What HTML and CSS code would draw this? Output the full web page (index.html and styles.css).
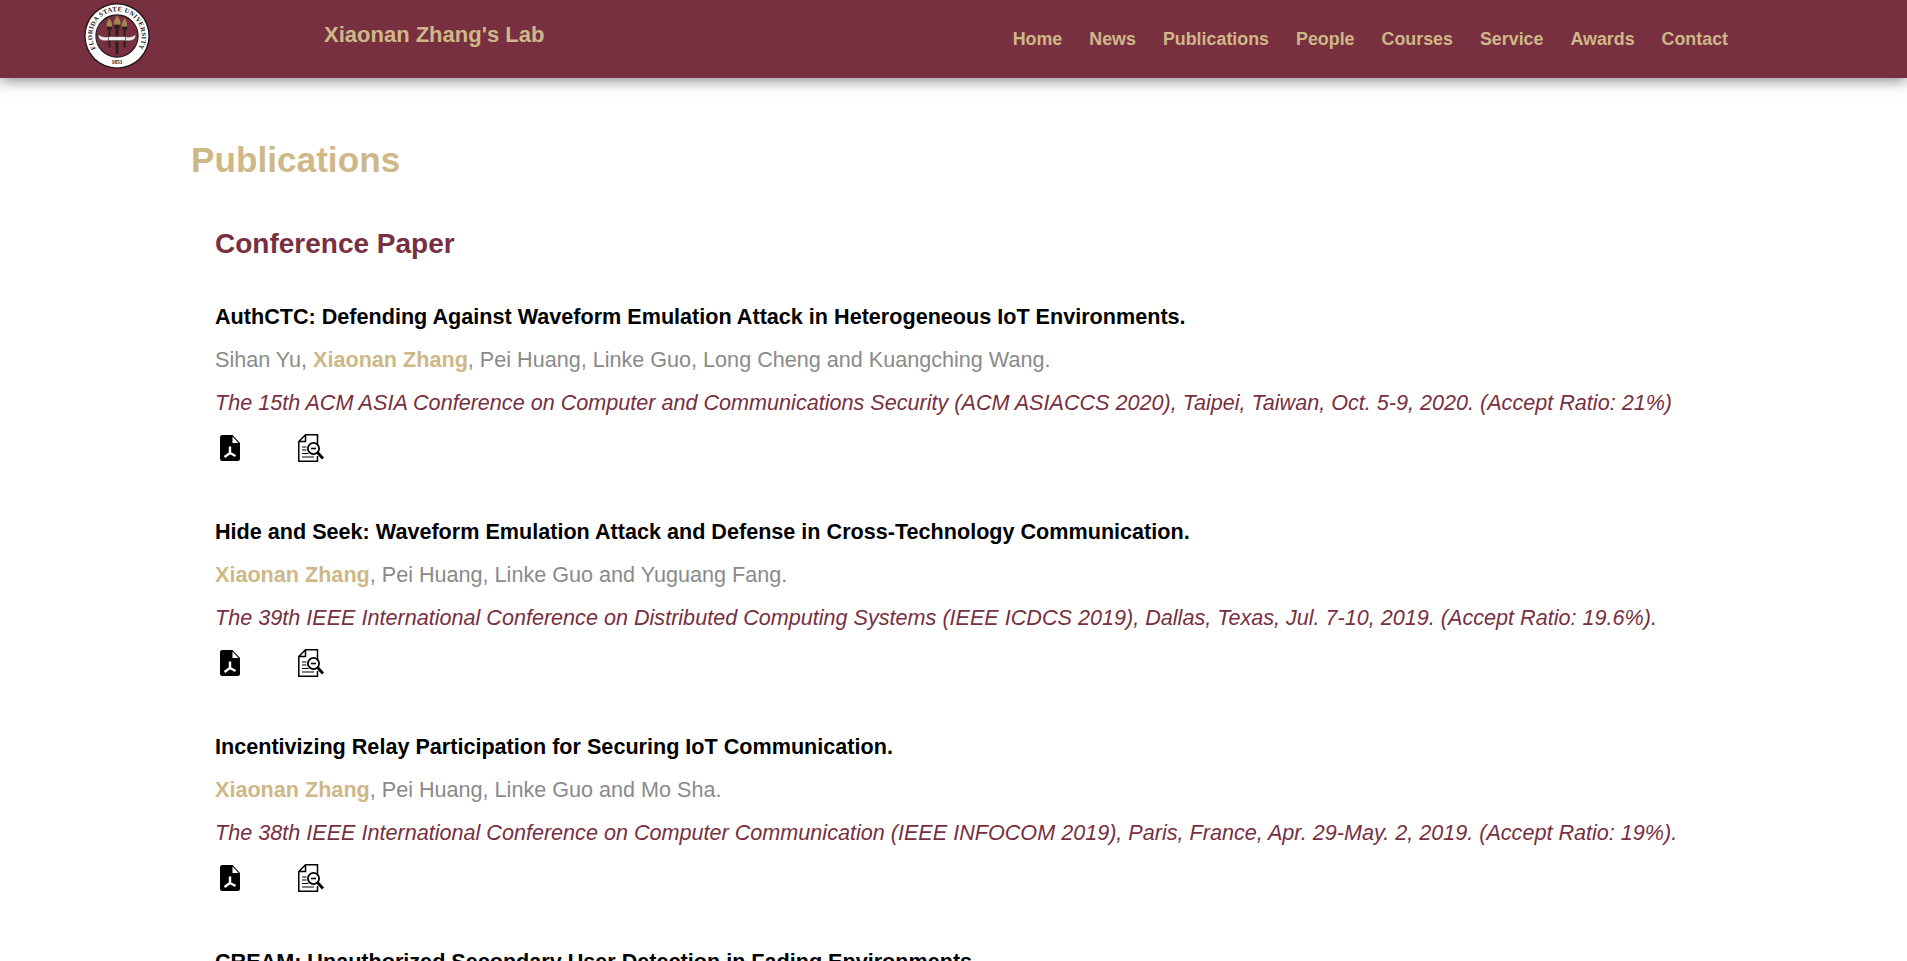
FILE: index.html
```html
<!DOCTYPE html>
<html lang="en">
<head>
<meta charset="utf-8">
<title>Publications</title>
<link rel="stylesheet" href="styles.css">
</head>
<body>
<svg class="sprites" aria-hidden="true">
  <symbol id="pdf" viewBox="0 0 20 26"><path d="M2.5 0H12.5L20 8V23.5a2.5 2.5 0 0 1-2.5 2.5H2.5A2.5 2.5 0 0 1 0 23.5V2.5A2.5 2.5 0 0 1 2.5 0z" fill="#000"/><path d="M12.5 1.5V8H18.5z" fill="#fff"/><path d="M10 11.500V18M10 18L4.500 22M10 18L15.500 21" stroke="#fff" stroke-width="2.4" fill="none"/></symbol>
  <symbol id="review" viewBox="0 0 26 28"><path d="M7.5.8H19.5V11M19.5 22V27.2H.8V7.5L7.5.8V7.5H.8" fill="none" stroke="#000" stroke-width="1.5"/><path d="M4 13H8.5M4 16H8.5M4 19.5H10.5M4 23H16" stroke="#000" stroke-width="1.2"/><circle cx="15.5" cy="14.5" r="5.6" fill="#fff" stroke="#000" stroke-width="1.8"/><path d="M13 14.5H18" stroke="#000" stroke-width="1.6"/><path d="M19.5 18.5L25 24.5" stroke="#000" stroke-width="2.8"/></symbol>
</svg>
<header class="topbar">
  <div class="brand">
    <svg class="seal" viewBox="0 0 100 100" aria-hidden="true">
      <defs><path id="arcTop" d="M25.900 78.700A37.500 37.500 0 1 1 74.100 78.700"/></defs>
      <circle cx="50" cy="50" r="49.6" fill="#1c1414"/>
      <circle cx="50" cy="50" r="47.6" fill="#fff"/>
      <circle cx="50" cy="50" r="32" fill="#782f40" stroke="#1c1414" stroke-width="1.6"/>
      <text class="seal-text"><textPath href="#arcTop" startOffset="50%" text-anchor="middle">FLORIDA STATE UNIVERSITY</textPath></text>
      <text class="seal-year" x="50" y="93" text-anchor="middle">1851</text>
      <g fill="#a5854f">
        <path d="M35 36c-2-5 1-8 3-13 3 4 6 8 4 13z"/><path d="M45.500 33c-2-6 3-9 4.500-15 3 5 6.500 9 5 15z"/><path d="M58 36c-2-5 1-9 4-13 2 4 4 8 3 13z"/>
      </g>
      <g fill="#2c2018">
        <rect x="35" y="36" width="7" height="5"/><rect x="46" y="33" width="8" height="6"/><rect x="58" y="36" width="7" height="5"/>
        <rect x="37" y="41" width="3" height="26"/><rect x="48" y="39" width="4" height="38"/><rect x="60" y="41" width="3" height="26"/>
      </g>
      <path d="M21 47C27 52 31 52 37 51V57C31 58 27 57 23 54zM79 47C73 52 69 52 63 51V57C69 58 73 57 77 54z" fill="#eee" stroke="#1c1414" stroke-width=".6"/>
      <rect x="37" y="51" width="26" height="6" fill="#eee" stroke="#1c1414" stroke-width=".6"/>
    </svg>
    <span class="brand-name">Xiaonan Zhang's Lab</span>
  </div>
  <nav class="nav">
    <a>Home</a><a>News</a><a>Publications</a><a>People</a><a>Courses</a><a>Service</a><a>Awards</a><a>Contact</a>
  </nav>
</header>
<main class="content">
  <h1 class="page-title">Publications</h1>
  <section class="section">
    <h2 class="section-title">Conference Paper</h2>

    <article class="paper">
      <h3 class="paper-title">AuthCTC: Defending Against Waveform Emulation Attack in Heterogeneous IoT Environments.</h3>
      <p class="authors">Sihan Yu, <b class="me">Xiaonan Zhang</b>, Pei Huang, Linke Guo, Long Cheng and Kuangching Wang.</p>
      <p class="venue">The 15th ACM ASIA Conference on Computer and Communications Security (ACM ASIACCS 2020), Taipei, Taiwan, Oct. 5-9, 2020. (Accept Ratio: 21%)</p>
      <div class="links">
        <svg class="icon-pdf"><use href="#pdf"/></svg>
        <svg class="icon-review"><use href="#review"/></svg>
      </div>
    </article>

    <article class="paper">
      <h3 class="paper-title">Hide and Seek: Waveform Emulation Attack and Defense in Cross-Technology Communication.</h3>
      <p class="authors"><b class="me">Xiaonan Zhang</b>, Pei Huang, Linke Guo and Yuguang Fang.</p>
      <p class="venue">The 39th IEEE International Conference on Distributed Computing Systems (IEEE ICDCS 2019), Dallas, Texas, Jul. 7-10, 2019. (Accept Ratio: 19.6%).</p>
      <div class="links">
        <svg class="icon-pdf"><use href="#pdf"/></svg>
        <svg class="icon-review"><use href="#review"/></svg>
      </div>
    </article>

    <article class="paper">
      <h3 class="paper-title">Incentivizing Relay Participation for Securing IoT Communication.</h3>
      <p class="authors"><b class="me">Xiaonan Zhang</b>, Pei Huang, Linke Guo and Mo Sha.</p>
      <p class="venue">The 38th IEEE International Conference on Computer Communication (IEEE INFOCOM 2019), Paris, France, Apr. 29-May. 2, 2019. (Accept Ratio: 19%).</p>
      <div class="links">
        <svg class="icon-pdf"><use href="#pdf"/></svg>
        <svg class="icon-review"><use href="#review"/></svg>
      </div>
    </article>

    <article class="paper">
      <h3 class="paper-title">CREAM: Unauthorized Secondary User Detection in Fading Environments</h3>
    </article>
  </section>
</main>
</body>
</html>
```
FILE: styles.css
```css
html, body { margin: 0; height: 961px; overflow: hidden; background: #fff; }
body { font-family: "Liberation Sans", Arial, sans-serif; }
.sprites { display: none; }
.topbar { height: 78px; background: #782f40; box-shadow: 0 2px 14px rgba(0,0,0,.5); display: flex; justify-content: space-between; align-items: center; padding: 0 179px 0 84px; }
.brand { display: flex; align-items: center; gap: 174px; margin-top: -6px; }
.seal { width: 66px; height: 66px; display: block; }
.seal-text { font: bold 10px "Liberation Serif", serif; fill: #1c1414; letter-spacing: .55px; }
.seal-year { font: bold 8.500px "Liberation Serif", serif; fill: #1c1414; }
.brand-name { font-size: 22px; font-weight: 700; color: #ceb888; margin-top: -2px; }
.nav { display: flex; gap: 27px; font-size: 17.85px; font-weight: 700; color: #ceb888; margin-top: 1px; }
.content { padding: 60px 0 0 191px; }
.page-title { margin: 0; font-size: 35.2px; line-height: 44px; color: #ceb888; font-weight: 700; }
.section { padding: 45px 0 0 24px; }
.section-title { margin: 0 0 43px; font-size: 28px; line-height: 34px; color: #782f40; font-weight: 700; }
.paper { margin-bottom: 56px; }
.paper-title { margin: 0 0 18px; font-size: 21.6px; line-height: 25px; color: #000; font-weight: 700; }
.authors { margin: 0 0 18px; font-size: 21.6px; line-height: 25px; color: #8a8a8a; }
.me { color: #ceb888; }
.venue { margin: 0 0 18px; font-size: 21.6px; line-height: 25px; color: #782f40; font-style: italic; }
.links { display: flex; align-items: center; gap: 58px; padding-left: 5px; height: 30px; }
.icon-pdf { width: 20px; height: 26px; }
.icon-review { width: 26px; height: 28px; }
```
